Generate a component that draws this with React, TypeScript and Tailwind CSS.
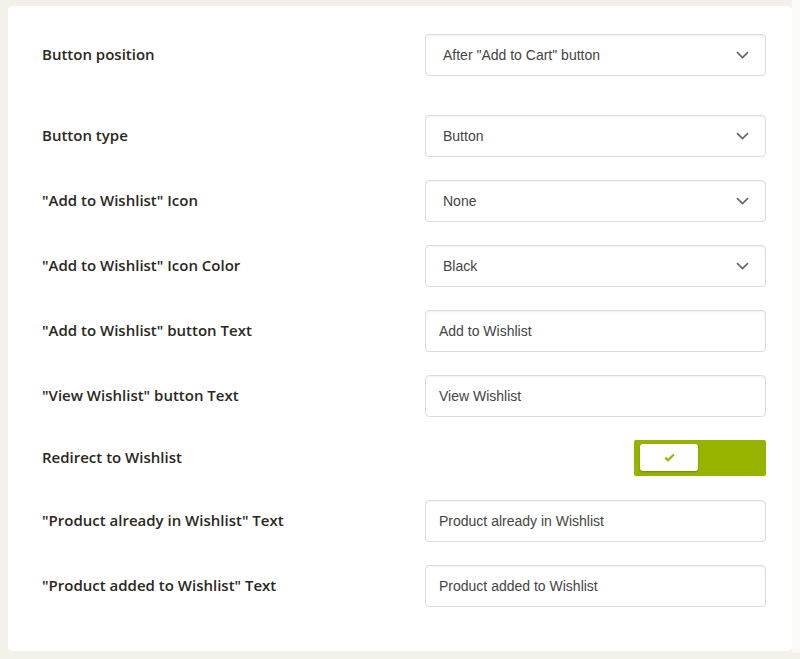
import React, { useState } from 'react';

type Field =
  | { kind: 'select'; label: string; value: string }
  | { kind: 'text'; label: string; value: string }
  | { kind: 'toggle'; label: string; value: boolean };

const fields: Field[] = [
  { kind: 'select', label: 'Button position', value: 'After "Add to Cart" button' },
  { kind: 'select', label: 'Button type', value: 'Button' },
  { kind: 'select', label: '"Add to Wishlist" Icon', value: 'None' },
  { kind: 'select', label: '"Add to Wishlist" Icon Color', value: 'Black' },
  { kind: 'text', label: '"Add to Wishlist" button Text', value: 'Add to Wishlist' },
  { kind: 'text', label: '"View Wishlist" button Text', value: 'View Wishlist' },
  { kind: 'toggle', label: 'Redirect to Wishlist', value: true },
  { kind: 'text', label: '"Product already in Wishlist" Text', value: 'Product already in Wishlist' },
  { kind: 'text', label: '"Product added to Wishlist" Text', value: 'Product added to Wishlist' },
];

const inputBox =
  'w-[341px] h-[42px] rounded-[4px] border border-[#dcdcdc] bg-white shadow-[inset_0_1px_2px_rgba(0,0,0,0.06)] flex items-center text-[14px] text-[#444] font-["Liberation_Sans",Arial,sans-serif]';

function SelectBox({ value }: { value: string }) {
  return (
    <div className={`${inputBox} pl-[17px] pr-[16px] justify-between`}>
      <span>{value}</span>
      <svg width="13" height="8" viewBox="0 0 13 8" fill="none">
        <path d="M1 1.2 L6.5 6.5 L12 1.2" stroke="#666" strokeWidth="1.7" />
      </svg>
    </div>
  );
}

function TextBox({ value }: { value: string }) {
  const [v, setV] = useState(value);
  return (
    <div className={`${inputBox} px-[13px]`}>
      <input
        value={v}
        onChange={(e) => setV(e.target.value)}
        className="w-full bg-transparent outline-none text-[14px] text-[#444]"
      />
    </div>
  );
}

function Toggle({ on }: { on: boolean }) {
  const [checked, setChecked] = useState(on);
  return (
    <div className="w-[341px] flex justify-end">
      <button
        onClick={() => setChecked(!checked)}
        className={`w-[132px] h-[36px] rounded-[2px] p-[4px] flex ${checked ? 'bg-[#97b300] justify-start' : 'bg-[#ccc] justify-end'}`}
      >
        <span className="w-[58px] h-[27px] ml-[2px] rounded-[3px] bg-white shadow-[0_1px_2px_rgba(0,0,0,0.25)] flex items-center justify-center">
          <svg width="11" height="9" viewBox="0 0 11 9" fill="none">
            <path d="M1.2 4.6 L4 7.2 L9.8 1.5" stroke="#97b300" strokeWidth="2.2" />
          </svg>
        </span>
      </button>
    </div>
  );
}

export default function App() {
  return (
    <div className="w-[800px] h-[659px] bg-[#f3f0ea] pt-[6px] pl-[8px] overflow-hidden flex">
      <div className="w-[784px] h-[645px] bg-white rounded-[4px] pt-[28px] pl-[34px] pr-[26px] flex flex-col gap-[23px]">
        {fields.map((f, i) => (
          <div
            key={f.label}
            className={`flex items-center justify-between ${i === 1 ? 'mt-[16px]' : ''} ${i === 7 ? 'mt-[1px]' : ''} ${f.kind === 'toggle' ? 'h-[36px]' : 'h-[42px]'}`}
          >
            <label className="text-[15px] font-semibold text-[#2b2722] font-['Open_Sans',sans-serif] -mt-[1px]">
              {f.label}
            </label>
            {f.kind === 'select' && <SelectBox value={f.value} />}
            {f.kind === 'text' && <TextBox value={f.value} />}
            {f.kind === 'toggle' && <Toggle on={f.value} />}
          </div>
        ))}
      </div>
      <div className="w-[8px] h-[653px] -mt-[6px] bg-[#fbfaf8]" />
    </div>
  );
}
